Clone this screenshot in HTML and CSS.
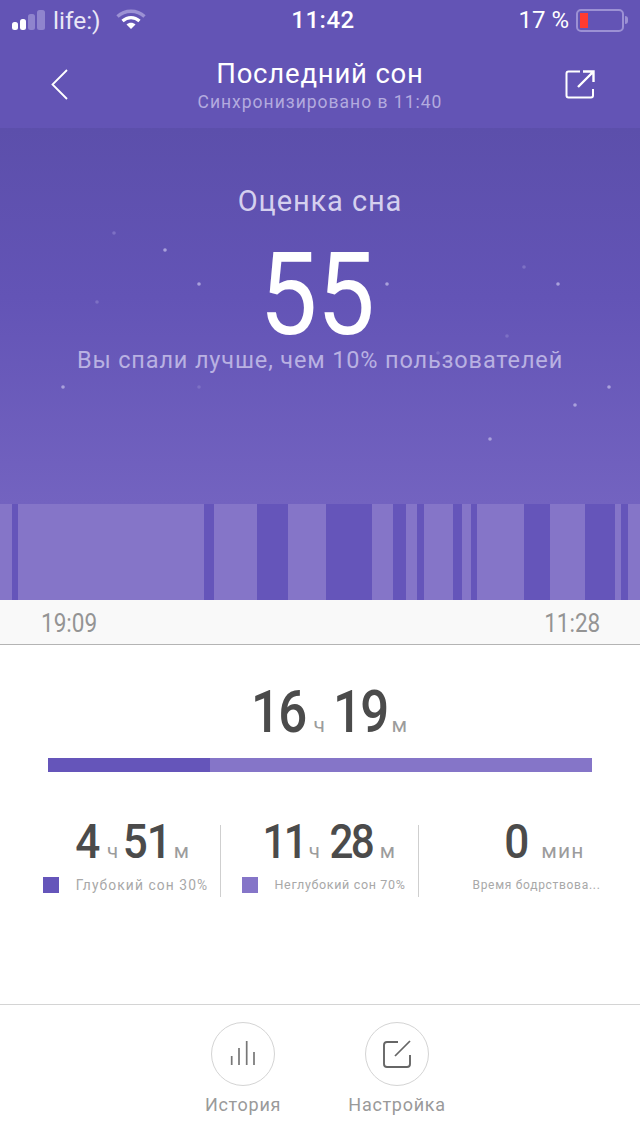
FILE: index.html
```html
<!DOCTYPE html>
<html lang="ru">
<head>
<meta charset="utf-8">
<title>Последний сон</title>
<link rel="stylesheet" href="styles.css">
</head>
<body>
<div class="page">
  <section class="top">
    <div class="status">
      <div class="status-left">
        <svg class="signal" width="34" height="22" viewBox="0 0 34 22"><rect x="0" y="13" width="6" height="8" rx="2.500" fill="#fff"/><rect x="8" y="10" width="6" height="11" rx="2.500" fill="#fff"/><rect x="16" y="5" width="7" height="16" rx="2.500" fill="#8f84cd"/><rect x="25" y="1" width="8" height="20" rx="2.500" fill="#8f84cd"/></svg>
        <span class="carrier">life:)</span>
        <svg class="wifi" width="30" height="22" viewBox="0 0 30 22"><path d="M1.500 7.500C9 .5 21 .5 28.500 7.500" fill="none" stroke="#9c91d4" stroke-width="3.400"/><path d="M6.500 12C11.500 7.500 18.500 7.500 23.500 12" fill="none" stroke="#fff" stroke-width="3.200"/><path d="M10.500 15.500C13 13 17 13 19.500 15.500L15 20Z" fill="#fff"/></svg>
      </div>
      <div class="clock">11:42</div>
      <div class="status-right">
        <span class="pct">17 %</span>
        <span class="battery"><span class="charge"></span></span>
        <span class="nub"></span>
      </div>
    </div>
    <header class="nav">
      <svg class="back" width="20" height="32" viewBox="0 0 20 32"><path d="M17 2 2.500 16.500 17 31" fill="none" stroke="#fff" stroke-width="1.800"/></svg>
      <div class="nav-title">
        <h1>Последний сон</h1>
        <p>Синхронизировано в 11:40</p>
      </div>
      <svg class="share" width="30" height="30" viewBox="0 0 30 30"><path d="M15 2.500H3.500Q1.500 2.500 1.500 4.500V26.500Q1.500 28.500 3.500 28.500H26Q28 28.500 28 26.500V20" fill="none" stroke="#fff" stroke-width="2"/><path d="M13 18 27.500 3.500M18 2.500H28.500V13" fill="none" stroke="#fff" stroke-width="2.400"/></svg>
    </header>
  </section>

  <section class="hero">
    <svg class="stars" width="640" height="376" viewBox="0 128 640 376">
      <g fill="#a9a0db">
        <circle cx="165" cy="250" r="1.800"/><circle cx="199" cy="284" r="1.800"/><circle cx="63" cy="387" r="1.800"/><circle cx="387" cy="284" r="1.800"/><circle cx="558" cy="284" r="1.800"/><circle cx="609" cy="387" r="1.800"/><circle cx="575" cy="405" r="1.800"/><circle cx="490" cy="439" r="1.800"/>
      </g>
      <g fill="#7d70c4">
        <circle cx="114" cy="233" r="1.800"/><circle cx="97" cy="302" r="1.800"/><circle cx="199" cy="387" r="1.800"/><circle cx="524" cy="267" r="1.800"/><circle cx="507" cy="336" r="1.800"/><circle cx="438" cy="353" r="1.800"/>
      </g>
    </svg>
    <h2 class="score-label">Оценка сна</h2>
    <div class="score"><span>55</span></div>
    <p class="score-note">Вы спали лучше, чем 10% пользователей</p>
  </section>

  <div class="chart">
    <i class="l" style="width:12px"></i><i class="d" style="width:6px"></i><i class="l" style="width:186px"></i><i class="d" style="width:10px"></i><i class="l" style="width:43px"></i><i class="d" style="width:31px"></i><i class="l" style="width:38px"></i><i class="d" style="width:46px"></i><i class="l" style="width:21px"></i><i class="d" style="width:13px"></i><i class="l" style="width:11px"></i><i class="d" style="width:7px"></i><i class="l" style="width:29px"></i><i class="d" style="width:9px"></i><i class="l" style="width:9px"></i><i class="d" style="width:6px"></i><i class="l" style="width:47px"></i><i class="d" style="width:26px"></i><i class="l" style="width:35px"></i><i class="d" style="width:30px"></i><i class="l" style="width:6px"></i><i class="d" style="width:7px"></i><i class="l" style="width:12px"></i>
  </div>
  <div class="times"><span>19:09</span><span>11:28</span></div>

  <main class="summary">
    <div class="total">
      <b class="num-lg">16</b><small class="unit-lg">ч</small><b class="num-lg">19</b><small class="unit-lg">м</small>
    </div>
    <div class="bar"><div class="bar-deep"></div></div>
    <div class="stats">
      <div class="stat">
        <div class="val"><b>4</b><small>ч</small><b>51</b><small>м</small></div>
        <div class="cap"><i class="sw sw-d"></i><span>Глубокий сон 30%</span></div>
      </div>
      <div class="stat stat-mid">
        <div class="val"><b>11</b><small>ч</small><b>28</b><small>м</small></div>
        <div class="cap"><i class="sw sw-l"></i><span>Неглубокий сон 70%</span></div>
      </div>
      <div class="stat stat-last">
        <div class="val"><b>0</b><small class="wide">мин</small></div>
        <div class="cap"><span>Время бодрствова...</span></div>
      </div>
    </div>
  </main>

  <footer class="foot">
    <div class="action">
      <span class="ring"><svg width="30" height="30" viewBox="0 0 30 30"><path d="M3.700 17V26M11 9V26M18.700 2V26M26 13V26" fill="none" stroke="#777" stroke-width="1.700"/></svg></span>
      <span class="action-label">История</span>
    </div>
    <div class="action">
      <span class="ring"><svg width="30" height="30" viewBox="0 0 30 30"><path d="M16 3H5Q2 3 2 6V25Q2 28 5 28H25Q28 28 28 25V16" fill="none" stroke="#666" stroke-width="1.900"/><path d="M13 17 28 2" fill="none" stroke="#666" stroke-width="1.700"/></svg></span>
      <span class="action-label">Настройка</span>
    </div>
  </footer>
</div>
</body>
</html>
```
FILE: styles.css
```css
* { box-sizing: border-box; }
html, body { margin: 0; padding: 0; background: #fff; }
body { font-family: Roboto, "Noto Sans", sans-serif; }
.page { width: 640px; height: 1136px; display: flex; flex-direction: column; overflow: hidden; }

.top { background: #6354b5; height: 128px; color: #fff; }
.status { height: 40px; display: grid; grid-template-columns: 1fr auto 1fr; align-items: center; padding: 0 12px 0 12px; }
.status-left { display: flex; align-items: center; }
.carrier { font-size: 24.500px; color: #e9e6f6; margin-left: 7px; }
.wifi { margin-left: 15px; }
.clock { font-size: 24px; font-weight: 500; letter-spacing: .5px; margin-left: 6px; }
.status-right { display: flex; align-items: center; justify-content: flex-end; }
.pct { font-size: 24px; margin-right: 7px; }
.battery { width: 48px; height: 23px; border: 2px solid #9c91d4; border-radius: 5px; padding: 2px; display: flex; }
.charge { width: 8px; background: #ff3b30; }
.nub { width: 3px; height: 8px; background: #9c91d4; margin-left: 1px; border-radius: 0 3px 3px 0; }

.nav { height: 88px; display: grid; grid-template-columns: 1fr auto 1fr; align-items: start; padding: 0 45px; }
.back { margin: 28px 0 0 5px; }
.share { margin-top: 29px; justify-self: end; }
.nav-title { text-align: center; padding-top: 17px; }
.nav-title h1 { margin: 0; font-size: 27.500px; line-height: 34px; font-weight: 400; letter-spacing: .8px; }
.nav-title p { margin: 0; padding-top: 1px; font-size: 17.500px; line-height: 20px; color: #b3abdf; letter-spacing: 1px; }

.hero { position: relative; height: 376px; background: linear-gradient(180deg, #5c4fab 0%, #6354b6 45%, #7363c0 100%); display: flex; flex-direction: column; align-items: center; text-align: center; }
.stars { position: absolute; left: 0; top: 0; }
.score-label { position: relative; margin: 53px 0 0; font-size: 29px; line-height: 40px; font-weight: 400; color: #d5d0ee; letter-spacing: .9px; }
.score { position: relative; height: 100px; margin-top: 24px; padding-right: 6px; line-height: 100px; color: #fff; font-size: 115px; font-weight: 400; }
.score span { display: inline-block; transform: scaleX(.9); letter-spacing: -1px; }
.score-note { position: relative; margin: 0; font-size: 23.500px; line-height: 30px; color: #b9b1e2; letter-spacing: .85px; white-space: nowrap; }

.chart { height: 96px; display: flex; }
.chart i { display: block; flex: none; }
.chart .l { background: #8575c8; }
.chart .d { background: #6555ba; }

.times { height: 45px; background: #f9f9f9; border-bottom: 1px solid #b4b4b4; display: flex; justify-content: space-between; align-items: center; padding: 2px 40px 0 41px; font-size: 25px; color: #949494; }
.times span { display: inline-block; transform: scaleX(.9); }
.times span:first-child { transform-origin: left; }
.times span:last-child { transform-origin: right; }

.summary { flex: 1; display: flex; flex-direction: column; }
.total { height: 113px; display: flex; justify-content: center; align-items: baseline; padding-top: 32px; padding-left: 18px; line-height: 70px; }
.num-lg { font-size: 60px; font-weight: 500; color: #4b4b4b; display: inline-block; width: 56px; letter-spacing: -2px; transform: scaleX(.85); transform-origin: left; }
.unit-lg { font-size: 21px; color: #9c9c9c; width: 26px; padding-left: 7px; }
.unit-lg:last-child { width: 19px; padding-left: 3px; }

.bar { height: 14px; margin: 0 48px; background: #8575c8; }
.bar-deep { width: 162px; height: 100%; background: #6555ba; }

.stats { display: flex; margin-top: 53px; padding-left: 23px; }
.stat { width: 198px; height: 72px; border-right: 1px solid #cfcfcf; display: flex; flex-direction: column; align-items: center; }
.stat-last { border-right: 0; width: 221px; }
.val { height: 44px; margin-left: 20px; display: flex; align-items: baseline; justify-content: center; line-height: 34px; }
.val b { font-size: 49px; font-weight: 500; color: #4b4b4b; display: inline-block; transform: scaleX(.9); letter-spacing: -1px; }
.val small { font-size: 20.500px; color: #9c9c9c; margin: 0 0 0 6px; }
.val small + b { margin-left: 2px; }
.val small:last-child { margin-left: 0; }
.val small.wide { margin-left: 11px; font-size: 21px; letter-spacing: 1.200px; }
.stat-mid .val { margin-left: 15px; }
.stat-mid .val b { letter-spacing: -3px; transform: scaleX(.86); }
.stat-mid .val small { margin-left: 0; }
.stat-mid .val small + b { margin-left: 6px; }
.stat-mid .val small:last-child { margin-left: 4px; }
.stat-last .val { margin-left: 29px; }
.cap { margin-top: 8px; margin-left: 8px; display: flex; align-items: center; font-size: 13.800px; color: #a8a8a8; letter-spacing: 1.100px; line-height: 16px; white-space: nowrap; }
.stat-mid .cap { font-size: 12.500px; letter-spacing: .65px; margin-left: 8px; }
.stat-last .cap { margin-left: 14px; font-size: 12px; letter-spacing: .7px; }
.sw { width: 16px; height: 16px; margin-right: 17px; display: block; flex: none; }
.sw-d { background: #6555ba; }
.sw-l { background: #8575c8; }

.foot { height: 132px; border-top: 1px solid #d4d4d4; display: flex; justify-content: center; gap: 60px; padding-top: 17px; }
.action { width: 94px; display: flex; flex-direction: column; align-items: center; }
.ring { width: 64px; height: 64px; border: 1px solid #d4d4d4; border-radius: 50%; display: flex; align-items: center; justify-content: center; }
.action-label { margin-top: 7px; font-size: 18px; line-height: 24px; color: #9a9a9a; letter-spacing: .7px; white-space: nowrap; }
```
